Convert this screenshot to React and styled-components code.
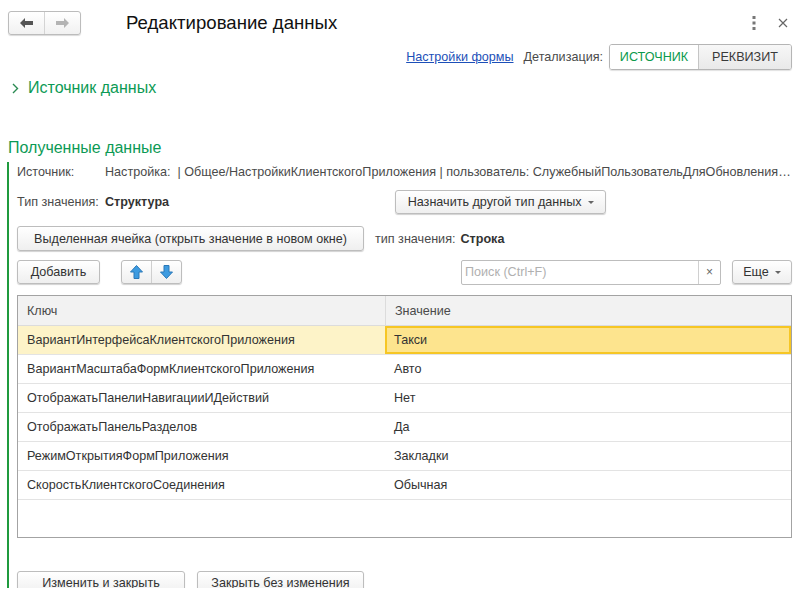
import React from 'react'
import styled, { createGlobalStyle, css } from 'styled-components'

const GlobalStyle = createGlobalStyle`
  html, body {
    margin: 0;
    padding: 0;
    background: #fff;
  }
  body {
    font-family: "Liberation Sans", Arial, sans-serif;
    font-size: 12.6px;
    color: #333;
  }
`

const Page = styled.div`
  width: 800px;
  height: 588px;
  overflow: hidden;
  background: #fff;
`

const Header = styled.div`
  display: flex;
  align-items: center;
  height: 24px;
  padding: 11px 8px 0 8px;
`

const NavGroup = styled.div`
  display: flex;
  height: 22px;
  border: 1px solid #bcbcbc;
  border-radius: 3px;
  background: linear-gradient(#fff, #f1f1f1);
  box-shadow: 0 1px 1px rgba(0, 0, 0, 0.15);
`

const NavButton = styled.div`
  width: 35px;
  display: flex;
  align-items: center;
  justify-content: center;
  & + & {
    border-left: 1px solid #d4d4d4;
  }
`

const Title = styled.h1`
  margin: 0 0 0 45px;
  font-weight: normal;
  font-size: 18.6px;
  color: #111;
  flex: 1;
`

const WinIcons = styled.div`
  display: flex;
  align-items: center;
  gap: 22px;
  padding-right: 4px;
`

const SettingsRow = styled.div`
  display: flex;
  justify-content: flex-end;
  align-items: center;
  height: 24px;
  margin-top: 10px;
  padding-right: 8px;
`

const Link = styled.a`
  color: #1c4fb8;
  text-decoration: underline;
  margin-right: 10px;
  cursor: pointer;
`

const Label = styled.span`
  color: #4a4a4a;
  margin-right: ${(p) => p.$mr || 0}px;
  margin-left: ${(p) => p.$ml || 0}px;
  white-space: nowrap;
`

const Toggle = styled.div`
  display: flex;
  height: 24px;
  border: 1px solid #b5b5b5;
  border-radius: 3px;
  overflow: hidden;
  box-shadow: 0 1px 1px rgba(0, 0, 0, 0.12);
`

const ToggleItem = styled.div`
  display: flex;
  align-items: center;
  justify-content: center;
  width: ${(p) => p.$w}px;
  ${(p) =>
    p.$active
      ? css`
          background: #fff;
          color: #0c9a4c;
        `
      : css`
          background: linear-gradient(#f7f7f7, #e9e9e9);
          color: #3a3a3a;
          border-left: 1px solid #c5c5c5;
        `}
`

const Section = styled.div`
  display: flex;
  align-items: center;
  gap: 9px;
  margin: ${(p) => p.$mt}px 0 0 ${(p) => p.$ml}px;
  height: 20px;
  font-size: 16px;
  color: #0c9a55;
`

const Group = styled.div`
  margin: 4px 0 0 7px;
  border-left: 2px solid #1f9a3e;
  padding: 2px 8px 0 8px;
  display: flex;
  flex-direction: column;
`

const Row = styled.div`
  display: flex;
  align-items: center;
  height: ${(p) => p.$h || 24}px;
  margin-top: ${(p) => p.$mt || 0}px;
`

const SourceText = styled.span`
  flex: 1;
  min-width: 0;
  white-space: nowrap;
  overflow: hidden;
  text-overflow: ellipsis;
  color: #4a4a4a;
`

const FieldLabel = styled.span`
  width: ${(p) => p.$w}px;
  flex: none;
  color: #4a4a4a;
  white-space: nowrap;
`

const Strong = styled.span`
  font-weight: bold;
  color: #333;
`

const Button = styled.div`
  display: inline-flex;
  align-items: center;
  justify-content: center;
  gap: 6px;
  box-sizing: border-box;
  width: ${(p) => (p.$w ? `${p.$w}px` : 'auto')};
  height: ${(p) => p.$h || 24}px;
  padding: 0 8px;
  margin-left: ${(p) => p.$ml || 0}px;
  border: 1px solid #bdbdbd;
  border-radius: 3px;
  background: linear-gradient(#fff, #efefef);
  box-shadow: 0 1px 1px rgba(0, 0, 0, 0.18);
  color: #333;
  white-space: nowrap;
  flex: none;
`

const Caret = styled.span`
  width: 0;
  height: 0;
  border-left: 3px solid transparent;
  border-right: 3px solid transparent;
  border-top: 3px solid #666;
  margin-top: 1px;
`

const ArrowGroup = styled.div`
  display: flex;
  height: 24px;
  margin-left: 21px;
  border: 1px solid #bdbdbd;
  border-radius: 3px;
  background: linear-gradient(#fff, #efefef);
  box-shadow: 0 1px 1px rgba(0, 0, 0, 0.18);
  box-sizing: border-box;
`

const ArrowButton = styled.div`
  width: 29px;
  display: flex;
  align-items: center;
  justify-content: center;
  & + & {
    border-left: 1px solid #cfcfcf;
  }
`

const Search = styled.div`
  display: flex;
  box-sizing: border-box;
  height: 25px;
  width: 260px;
  margin-left: auto;
  border: 1px solid #bdbdbd;
  border-radius: 2px;
  background: #fff;
`

const SearchInput = styled.div`
  flex: 1;
  display: flex;
  align-items: center;
  padding-left: 3px;
  color: #b0b0b0;
`

const SearchClear = styled.div`
  width: 21px;
  display: flex;
  align-items: center;
  justify-content: center;
  border-left: 1px solid #d0d0d0;
  color: #666;
  font-size: 12px;
`

const Table = styled.div`
  margin-top: 11px;
  height: 243px;
  box-sizing: border-box;
  border: 1px solid #a3a3a3;
  display: grid;
  grid-template-columns: 367px 1fr;
  grid-template-rows: 30px;
  grid-auto-rows: 29px;
  align-content: start;
`

const HeadCell = styled.div`
  display: flex;
  align-items: center;
  padding-left: 9px;
  background: #f2f2f2;
  border-bottom: 1px solid #dcdcdc;
  color: #4a4a4a;
  ${(p) => p.$sep && css`border-left: 1px solid #dcdcdc;`}
`

const Cell = styled.div`
  display: flex;
  align-items: center;
  padding-left: 9px;
  border-bottom: 1px solid #e3e3e3;
  color: #333;
  white-space: nowrap;
  overflow: hidden;
  ${(p) =>
    p.$selected &&
    css`
      background: #fdf3c8;
    `}
  ${(p) =>
    p.$current &&
    css`
      background: #fde48e;
      box-shadow: inset 0 0 0 2px #f6c624;
    `}
`

const Footer = styled.div`
  display: flex;
  gap: 12px;
  margin-top: 33px;
`

const rows = [
  ['ВариантИнтерфейсаКлиентскогоПриложения', 'Такси'],
  ['ВариантМасштабаФормКлиентскогоПриложения', 'Авто'],
  ['ОтображатьПанелиНавигацииИДействий', 'Нет'],
  ['ОтображатьПанельРазделов', 'Да'],
  ['РежимОткрытияФормПриложения', 'Закладки'],
  ['СкоростьКлиентскогоСоединения', 'Обычная'],
]

const NavArrow = ({ dir, color }) => (
  <svg width="13" height="10" viewBox="0 0 13 10">
    <path
      d="M0 5 L5 0 L5 3 L13 3 L13 7 L5 7 L5 10 Z"
      fill={color}
      transform={dir === 'right' ? 'translate(13 0) scale(-1 1)' : undefined}
    />
  </svg>
)

const BlueArrow = ({ dir }) => (
  <svg width="13" height="14" viewBox="0 0 13 14">
    <path
      d="M6.5 0.5 L12.5 7 L9 7 L9 13.5 L4 13.5 L4 7 L0.5 7 Z"
      fill="#3d9be0"
      stroke="#2a78b8"
      strokeWidth="1"
      strokeLinejoin="round"
      transform={dir === 'down' ? 'translate(0 14) scale(1 -1)' : undefined}
    />
  </svg>
)

export default function App() {
  return (
    <>
      <GlobalStyle />
      <Page>
        <Header>
          <NavGroup>
            <NavButton>
              <NavArrow dir="left" color="#555" />
            </NavButton>
            <NavButton>
              <NavArrow dir="right" color="#b4b4b4" />
            </NavButton>
          </NavGroup>
          <Title>Редактирование данных</Title>
          <WinIcons>
            <svg width="4" height="14" viewBox="0 0 4 14">
              <rect x="0.5" y="0" width="3" height="3" fill="#777" />
              <rect x="0.5" y="5.5" width="3" height="3" fill="#777" />
              <rect x="0.5" y="11" width="3" height="3" fill="#777" />
            </svg>
            <svg width="10" height="10" viewBox="0 0 10 10">
              <path d="M1 1 L9 9 M9 1 L1 9" stroke="#666" strokeWidth="1.2" />
            </svg>
          </WinIcons>
        </Header>

        <SettingsRow>
          <Link>Настройки формы</Link>
          <Label $mr={6}>Детализация:</Label>
          <Toggle>
            <ToggleItem $active $w={88}>ИСТОЧНИК</ToggleItem>
            <ToggleItem $w={92}>РЕКВИЗИТ</ToggleItem>
          </Toggle>
        </SettingsRow>

        <Section $mt={9} $ml={12}>
          <svg width="7" height="11" viewBox="0 0 7 11">
            <path d="M1 1 L5.5 5.5 L1 10" fill="none" stroke="#2a8a52" strokeWidth="1.4" />
          </svg>
          Источник данных
        </Section>

        <Section $mt={40} $ml={8}>Полученные данные</Section>

        <Group>
          <Row $h={16}>
            <FieldLabel $w={88}>Источник:</FieldLabel>
            <SourceText>
              Настройка:&nbsp;&nbsp;| Общее/НастройкиКлиентскогоПриложения | пользователь:
              СлужебныйПользовательДляОбновленияДанныхИнформационнойБазы
            </SourceText>
          </Row>

          <Row $mt={10}>
            <FieldLabel $w={88}>Тип значения:</FieldLabel>
            <Strong>Структура</Strong>
            <Button $ml={226} $w={211}>
              Назначить другой тип данных <Caret />
            </Button>
          </Row>

          <Row $mt={12} $h={25}>
            <Button $h={25} $w={347}>
              Выделенная ячейка (открыть значение в новом окне)
            </Button>
            <Label $mr={5} $ml={11}>
              тип значения:
            </Label>
            <Strong>Строка</Strong>
          </Row>

          <Row $mt={9}>
            <Button $w={83}>Добавить</Button>
            <ArrowGroup>
              <ArrowButton>
                <BlueArrow dir="up" />
              </ArrowButton>
              <ArrowButton>
                <BlueArrow dir="down" />
              </ArrowButton>
            </ArrowGroup>
            <Search>
              <SearchInput>Поиск (Ctrl+F)</SearchInput>
              <SearchClear>×</SearchClear>
            </Search>
            <Button $ml={11} $w={60}>
              Еще <Caret />
            </Button>
          </Row>

          <Table>
            <HeadCell>Ключ</HeadCell>
            <HeadCell $sep>Значение</HeadCell>
            {rows.map(([k, v], i) => (
              <React.Fragment key={k}>
                <Cell $selected={i === 0}>{k}</Cell>
                <Cell $current={i === 0}>{v}</Cell>
              </React.Fragment>
            ))}
          </Table>

          <Footer>
            <Button $w={168}>Изменить и закрыть</Button>
            <Button $w={167}>Закрыть без изменения</Button>
          </Footer>
        </Group>
      </Page>
    </>
  )
}
